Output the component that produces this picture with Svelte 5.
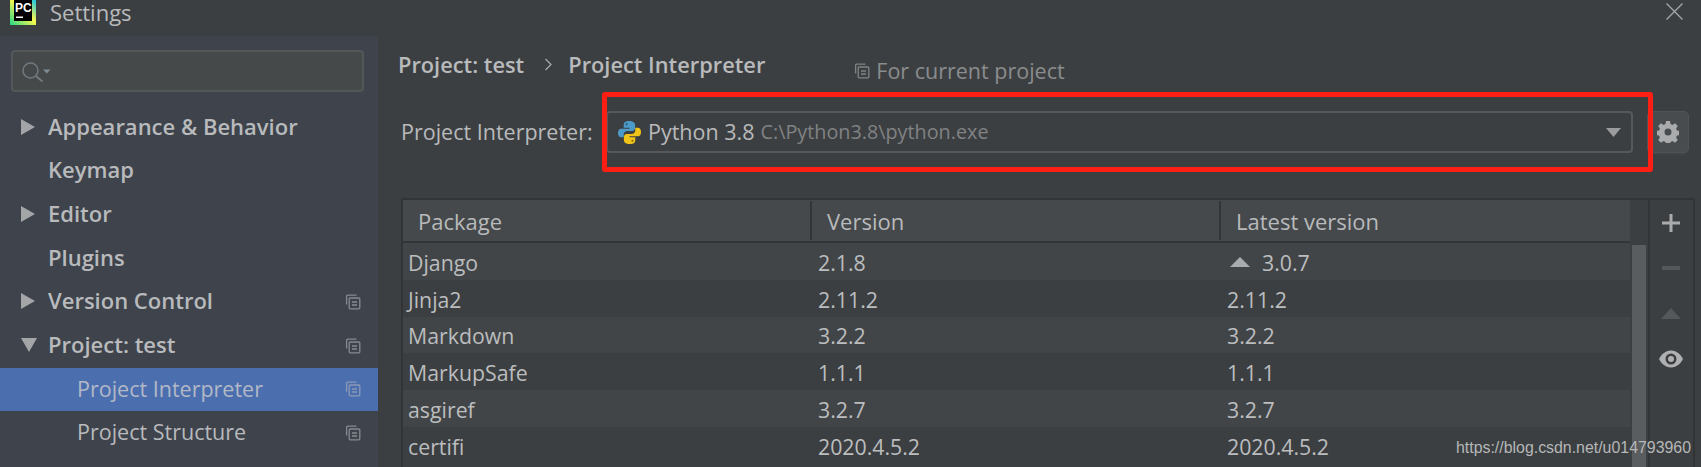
<script lang="ts">
  const tree = [
    { label: 'Appearance & Behavior', arrow: 'right' },
    { label: 'Keymap' },
    { label: 'Editor', arrow: 'right' },
    { label: 'Plugins' },
    { label: 'Version Control', arrow: 'right', copy: true },
    { label: 'Project: test', arrow: 'down', copy: true },
    { label: 'Project Interpreter', child: true, selected: true, copy: true },
    { label: 'Project Structure', child: true, copy: true }
  ];

  const packages = [
    ['Django', '2.1.8', '3.0.7', true],
    ['Jinja2', '2.11.2', '2.11.2'],
    ['Markdown', '3.2.2', '3.2.2'],
    ['MarkupSafe', '1.1.1', '1.1.1'],
    ['asgiref', '3.2.7', '3.2.7'],
    ['certifi', '2020.4.5.2', '2020.4.5.2']
  ];
</script>

{#snippet copyIcon(size = 16)}
  <svg class="copy" width={size} height={size} viewBox="0 0 16 16" fill="none" stroke="currentColor" stroke-width="1.3">
    <path d="M11.5 1.200H2.800a1.200 1.200 0 0 0-1.200 1.200v8.200" />
    <rect x="4.200" y="4" width="10.600" height="10.800" rx="1" />
    <path d="M7 8h5M7 11h5" />
  </svg>
{/snippet}

<div class="window">
  <header class="title">
    <svg class="logo" width="26" height="26" viewBox="0 0 26 26">
      <defs>
        <linearGradient id="pc" x1="0" y1="1" x2="1" y2="0">
          <stop offset="0" stop-color="#21d789" />
          <stop offset="0.55" stop-color="#fcf84a" />
          <stop offset="1" stop-color="#07c3f2" />
        </linearGradient>
      </defs>
      <rect width="26" height="26" fill="url(#pc)" />
      <rect x="4" y="1" width="18" height="21" fill="#000" />
      <text x="5" y="13" class="logo-text">PC</text>
      <rect x="6" y="17.500" width="7" height="1.500" fill="#fff" />
    </svg>
    <span class="title-text">Settings</span>
    <svg class="close" width="17" height="17" viewBox="0 0 17 17" stroke="#a5a7a9" stroke-width="1.300">
      <path d="M.5.500l16 16M16.500.500l-16 16" />
    </svg>
  </header>

  <div class="body">
    <aside class="sidebar">
      <div class="search">
        <svg width="30" height="24" viewBox="0 0 30 24" fill="none">
          <circle cx="8.500" cy="11.500" r="7.500" stroke="#6f7a80" stroke-width="1.500" />
          <path d="M14 17l6.500 5.500" stroke="#6f7a80" stroke-width="2" />
          <path d="M21 10.500h7.500l-3.750 4z" fill="#7f8b91" />
        </svg>
      </div>
      <nav class="tree">
        {#each tree as item}
          <div class="row" class:selected={item.selected} class:child={item.child}>
            {#if item.arrow === 'right'}
              <svg class="arrow" width="14" height="16" viewBox="0 0 14 16"><path d="M0 0l14 8-14 8z" fill="#a3a5a7" /></svg>
            {:else if item.arrow === 'down'}
              <svg class="arrow" width="16" height="14" viewBox="0 0 16 14"><path d="M0 0h16l-8 14z" fill="#a3a5a7" /></svg>
            {/if}
            <span class="label">{item.label}</span>
            {#if item.copy}{@render copyIcon()}{/if}
          </div>
        {/each}
      </nav>
    </aside>

    <main class="content">
      <div class="crumbs">
        <b>Project: test</b>
        <svg width="7" height="13" viewBox="0 0 7 13" fill="none" stroke="#a9abad" stroke-width="1.200"><path d="M.5 1l5.500 5.500L.5 12" /></svg>
        <b class="crumb-last">Project Interpreter</b>
        <span class="scope">{@render copyIcon(16)}For current project</span>
      </div>

      <div class="interp-row">
        <span class="interp-label">Project Interpreter:</span>
        <div class="combo">
          <svg width="25" height="25" viewBox="0 0 26 26">
            <path d="M12.800 1C8.500 1 7 2.700 7 5v3h6v1H4.500C2.200 9 1 11 1 13.600 1 16.500 2.400 18 4.600 18H7v-3c0-2.200 1.600-3.600 3.800-3.600h5c1.700 0 3-1.300 3-3V5c0-2.300-2.300-4-6-4z" fill="#4b9ac7" />
            <path d="M13.200 25c4.300 0 5.800-1.700 5.800-4v-3h-6v-1h8.500c2.300 0 3.500-2 3.500-4.600 0-2.900-1.400-4.400-3.600-4.400H19v3c0 2.200-1.600 3.600-3.800 3.600h-5c-1.700 0-3 1.300-3 3V21c0 2.300 2.300 4 6 4z" fill="#f0c419" />
            <circle cx="10" cy="4.500" r="1" fill="#2d4f66" />
            <circle cx="16" cy="21.500" r="1" fill="#7a6410" />
          </svg>
          <span class="py">Python 3.8</span>
          <span class="path">C:\Python3.8\python.exe</span>
          <svg class="drop" width="15" height="9" viewBox="0 0 15 9"><path d="M0 0h15l-7.500 9z" fill="#9a9c9e" /></svg>
        </div>
        <button class="gear" aria-label="Settings">
          <svg width="22" height="22" viewBox="0 0 22 22">
            <path fill="#a9abad" fill-rule="evenodd" d="M9 0h4l.5 3 2 .9L18 2.200l2.800 2.800-1.700 2.500.9 2 3 .5v4l-3 .5-.9 2 1.700 2.500-2.800 2.800-2.500-1.700-2 .9-.5 3H9l-.5-3-2-.9L4 21.800 1.200 19l1.700-2.500-.9-2-3-.5v-4l3-.5.9-2L1.200 5 4 2.200l2.500 1.700 2-.9zM11 7.500a3.500 3.500 0 1 0 0 7 3.500 3.500 0 0 0 0-7z" />
          </svg>
        </button>
      </div>

      <div class="packages">
        <div class="table">
          <div class="head">
            <span>Package</span><span>Version</span><span>Latest version</span>
          </div>
          {#each packages as p, i}
            <div class="tr" class:alt={i % 2 === 1}>
              <span>{p[0]}</span>
              <span>{p[1]}</span>
              <span class="latest">
                {#if p[3]}<svg width="20" height="10" viewBox="0 0 20 10"><path d="M10 0l10 10H0z" fill="#a9abad" /></svg>{/if}
                {p[2]}
              </span>
            </div>
          {/each}
        </div>
        <div class="scroll"><div class="thumb"></div></div>
        <div class="tools">
          <svg width="18" height="18" viewBox="0 0 18 18"><path d="M7.500 0h3v7.500H18v3h-7.500V18h-3v-7.500H0v-3h7.500z" fill="#a9abad" /></svg>
          <svg width="18" height="4" viewBox="0 0 18 4"><rect width="18" height="4" fill="#55585a" /></svg>
          <svg width="20" height="11" viewBox="0 0 20 11"><path d="M10 0l10 11H0z" fill="#55585a" /></svg>
          <svg width="24" height="18" viewBox="0 0 24 17"><path fill="#aeb0b2" fill-rule="evenodd" d="M12 0c6 0 10 4.500 12 8.500C22 12.500 18 17 12 17S2 12.500 0 8.500C2 4.500 6 0 12 0zm0 3a5.500 5.500 0 1 0 0 11 5.500 5.500 0 0 0 0-11zm0 2.500a3 3 0 1 1 0 6 3 3 0 0 1 0-6z" /></svg>
        </div>
      </div>
    </main>
  </div>

  <div class="redbox"></div>
  <div class="watermark">https://blog.csdn.net/u014793960</div>
</div>

<style>
  :global(body) {
    margin: 0;
    background: #3c3f41;
  }

  .window {
    position: relative;
    width: 1701px;
    height: 467px;
    overflow: hidden;
    display: flex;
    flex-direction: column;
    background: #3c3f41;
    color: #b8babc;
    font-family: 'Open Sans', 'Noto Sans', sans-serif;
    font-size: 21.5px;
  }

  .title {
    height: 36px;
    flex: none;
    display: flex;
    align-items: flex-start;
    padding-left: 10px;
  }

  .logo {
    margin-top: -1px;
  }

  .logo-text {
    font: bold 12px 'Liberation Sans', sans-serif;
    fill: #fff;
  }

  .title-text {
    margin-left: 14px;
    font-size: 22px;
    line-height: 24px;
  }

  .close {
    margin: 3px 18px 0 auto;
  }

  .body {
    flex: 1;
    display: flex;
    min-height: 0;
  }

  .sidebar {
    width: 378px;
    flex: none;
    background: #3e434c;
    padding-top: 14px;
    box-sizing: border-box;
  }

  .search {
    margin: 0 14px 0 11px;
    height: 42px;
    box-sizing: border-box;
    border: 2px solid #53575a;
    border-radius: 4px;
    background: #46494a;
    display: flex;
    align-items: center;
    padding-left: 9px;
  }

  .tree {
    margin-top: 14px;
  }

  .row {
    position: relative;
    height: 43.600px;
    display: flex;
    align-items: center;
    padding-left: 48px;
    padding-right: 17px;
  }

  .row .label {
    font-weight: 600;
    font-size: 22px;
    flex: 1;
    padding-bottom: 4px;
  }

  .row.child {
    padding-left: 77px;
  }

  .row.child .label {
    font-weight: 400;
    font-size: 21.500px;
    padding-bottom: 2px;
  }

  .row.selected {
    background: #4b6eaf;
  }

  .row.selected .label {
    color: #b2b8c6;
  }

  .row.selected .copy {
    color: #8b99b8;
  }

  .arrow {
    position: absolute;
    left: 21px;
    top: 50%;
    margin-top: -1px;
    transform: translateY(-50%);
  }

  .copy {
    color: #868a90;
  }

  .content {
    flex: 1;
    min-width: 0;
    padding-left: 20px;
  }

  .crumbs {
    height: 50px;
    display: flex;
    align-items: center;
    gap: 21px;
    padding-top: 6px;
    box-sizing: border-box;
  }

  .crumbs b {
    font-weight: 600;
    font-size: 21.800px;
  }

  .crumbs .crumb-last {
    margin-left: -5px;
  }

  .scope {
    display: flex;
    align-items: center;
    gap: 6px;
    color: #8a8c8e;
    margin: 13px 0 0 68px;
  }

  .scope .copy {
    color: #808284;
  }

  .interp-row {
    display: flex;
    align-items: center;
    margin-top: 25px;
    height: 42px;
    padding-left: 3px;
  }

  .interp-label {
    width: 205px;
    flex: none;
    padding-bottom: 2px;
  }

  .combo {
    width: 1027px;
    height: 42px;
    box-sizing: border-box;
    border: 2px solid #565859;
    border-radius: 4px;
    display: flex;
    align-items: center;
    padding: 0 10px 0 9px;
    gap: 6px;
  }

  .py,
  .path {
    padding-bottom: 2px;
  }

  .path {
    color: #808284;
    font-size: 19.800px;
  }

  .drop {
    margin-left: auto;
  }

  .gear {
    margin-left: 14px;
    width: 42px;
    height: 42px;
    box-sizing: border-box;
    border: 1px solid #505355;
    padding: 0;
    border-radius: 5px;
    background: #484c4e;
    box-shadow: 0 2px 0 #414345;
    display: flex;
    align-items: center;
    justify-content: center;
  }

  .packages {
    margin: 45px 6px 0 3px;
    display: flex;
    border: 2px solid #323435;
    border-bottom: 0;
    height: 270px;
    box-sizing: border-box;
    font-size: 21.300px;
  }

  .table {
    width: 1227px;
    flex: none;
  }

  .head,
  .tr {
    display: grid;
    grid-template-columns: 409px 409px 409px;
  }

  .head {
    height: 43px;
    align-items: center;
    background: #45494b;
    border-bottom: 2px solid #323435;
    box-sizing: border-box;
    font-size: 22px;
  }

  .head span {
    padding-left: 15px;
    border-right: 2px solid #323435;
    line-height: 38px;
    padding-top: 1px;
  }

  .head span:last-child {
    border-right: 0;
  }

  .tr {
    height: 36.800px;
    align-items: center;
    background: #424547;
    color: #bbbdbf;
  }

  .tr.alt {
    background: #3c3f41;
  }

  .tr span {
    padding-left: 6px;
    padding-top: 2px;
  }

  .tr span:first-child {
    padding-left: 5px;
  }

  .latest {
    display: flex;
    align-items: center;
  }

  .latest svg {
    margin: 0 12px 0 3px;
  }

  .scroll {
    width: 18px;
    flex: none;
    padding-top: 45px;
    border-right: 2px solid #323435;
  }

  .thumb {
    height: 100%;
    background: #595d5f;
    margin: 0 2px;
  }

  .tools {
    width: 42px;
    flex: none;
    display: grid;
    grid-auto-rows: 45.500px;
    align-items: center;
    justify-items: center;
  }

  .redbox {
    position: absolute;
    left: 602px;
    top: 92px;
    width: 1051px;
    height: 80px;
    box-sizing: border-box;
    border: 5px solid #fe1f14;
    border-radius: 3px;
  }

  .watermark {
    position: absolute;
    right: 10px;
    top: 439px;
    font: 15.900px 'Liberation Sans', Arial, sans-serif;
    color: #b5b7b8;
  }
</style>
